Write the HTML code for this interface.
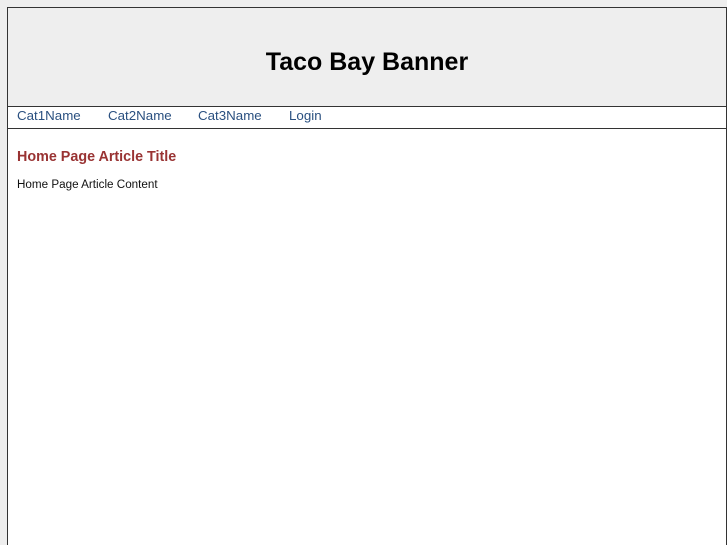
<!DOCTYPE html>
<html>
<head>
<meta charset="utf-8">
<style>
html,body{margin:0;padding:0;width:727px;height:545px;overflow:hidden;background:#eee;font-family:"Liberation Sans",Arial,sans-serif}
body{position:relative}
#wrap{position:absolute;left:7px;top:7px;width:718px;height:537px;border:1px solid #333;border-bottom:0;background:#fff;overflow:hidden}
#banner{position:absolute;left:0;top:0;width:718px;height:98px;background:#eee;border-bottom:1px solid #333;text-align:center;font-size:25px;font-weight:bold;line-height:108px;color:#000}
#nav{position:absolute;left:0;top:99px;width:718px;height:21px;border-bottom:1px solid #333;font-size:13.33px;line-height:18px;color:#2a5080}
#nav span{position:absolute;top:0;white-space:nowrap}
h1{position:absolute;left:9px;top:141px;margin:0;font-size:14.33px;line-height:17px;font-weight:bold;color:#993333;white-space:nowrap}
p{position:absolute;left:9px;top:169px;margin:0;font-size:11.67px;line-height:15px;color:#111;white-space:nowrap}
</style>
</head>
<body>
<div id="wrap">
<div id="banner">Taco Bay Banner</div>
<div id="nav"><span style="left:9px">Cat1Name</span><span style="left:100px">Cat2Name</span><span style="left:190px">Cat3Name</span><span style="left:281px">Login</span></div>
<h1>Home Page Article Title</h1>
<p>Home Page Article Content</p>
</div>
</body>
</html>
